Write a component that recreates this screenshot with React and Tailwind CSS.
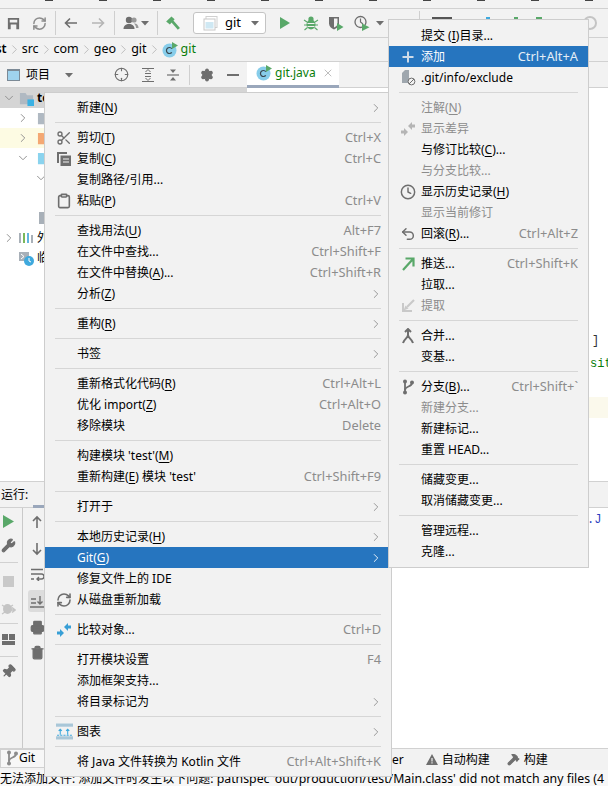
import { Scissors, Clock, Undo2, Clipboard, RefreshCw, Wrench, Printer, Trash2, Pin, Hammer, ChevronRight, ChevronDown, X, Crosshair, Settings } from 'lucide-react'

const GRAY = '#6e6e6e'
const GREEN = '#59a869'

const Svg = ({ size = 16, className = '', children }) => (
  <svg width={size} height={size} viewBox="0 0 16 16" className={`shrink-0 ${className}`}>{children}</svg>
)

const SaveIcon = () => (
  <Svg size={15}>
    <path fill={GRAY} fillRule="evenodd" d="M2 2h12v12H2z M4 4v3h8V4z M5 9v5h6V9z" />
  </Svg>
)
const ArrowLeft = ({ color }) => (
  <Svg><path d="M14 8H3M7 3.5 2.5 8 7 12.5" fill="none" stroke={color} strokeWidth="1.6" /></Svg>
)
const ArrowRight = ({ color }) => (
  <Svg><path d="M2 8h11M9 3.5 13.5 8 9 12.5" fill="none" stroke={color} strokeWidth="1.6" /></Svg>
)
const UserIcon = () => (
  <Svg>
    <circle cx="6" cy="5" r="3.2" fill={GRAY} />
    <path d="M0.5 14c0-3.5 2.5-5 5.5-5s5.5 1.5 5.5 5z" fill={GRAY} />
    <circle cx="11" cy="5" r="2.6" fill="#9a9a9a" />
    <path d="M11 8.5c2.5 0 4.5 1.2 4.5 4.5H13c0-2-.8-3.4-2-4.5z" fill="#9a9a9a" />
  </Svg>
)
const Caret = ({ color = GRAY }) => (
  <Svg size={8}><path d="M0 4h16L8 13z" fill={color} /></Svg>
)
const GreenHammer = () => (
  <Svg size={17}>
    <path d="M7 5 14 13" stroke={GREEN} strokeWidth="2.6" fill="none" />
    <path d="M2 6 7 1.5l3 2.5-4.5 5z" fill={GREEN} />
  </Svg>
)
const BugIcon = () => (
  <Svg>
    <ellipse cx="8" cy="9.5" rx="4.5" ry="5" fill={GREEN} />
    <circle cx="8" cy="4" r="2.6" fill={GREEN} />
    <path d="M1 5l3 2M15 5l-3 2M1 10h3M15 10h-3M1.5 15l3-2.5M14.5 15l-3-2.5M4 8.5h8M4 11.5h8" stroke={GREEN} strokeWidth="1.1" />
    <path d="M4.5 8.5h7M4.5 11.5h7" stroke="#f2f2f2" strokeWidth="1" />
  </Svg>
)
const CoverageIcon = () => (
  <Svg>
    <path d="M1 2h10v6.5c0 3-2.5 5-5 6-2.5-1-5-3-5-6z" fill={GRAY} />
    <path d="M6 3.5h3.5v5c0 2-1.5 3-3.5 4z" fill="#f2f2f2" />
    <path d="M9 8l6.5 4-6.5 4z" fill={GREEN} />
  </Svg>
)
const ProfileIcon = () => (
  <Svg>
    <circle cx="6.5" cy="7" r="5.5" fill="none" stroke={GRAY} strokeWidth="1.3" />
    <path d="M6.5 3.5V7l2.5 2" fill="none" stroke={GRAY} strokeWidth="1.2" />
    <path d="M8 8.5l7.5 3.7L8 16z" fill={GREEN} />
  </Svg>
)
const ClassIcon = ({ size = 16 }) => (
  <Svg size={size}>
    <circle cx="7.5" cy="8.5" r="7" fill="#87cdea" />
    <path d="M9.8 6.6A3 3 0 1 0 9.8 10.4" fill="none" stroke="#3a4750" strokeWidth="1.2" />
    <path d="M10 0l6 3.5L10 7z" fill={GREEN} />
  </Svg>
)
const ConfigIcon = () => (
  <Svg>
    <rect x="3" y="1.5" width="11" height="11" fill="none" stroke="#d0d0d0" />
    <rect x="1" y="4" width="11" height="11" fill="#fff" stroke="#c8c8c8" />
    <rect x="2.5" y="7" width="8" height="6.5" fill="#cfe8f3" />
  </Svg>
)
const ExpandIcon = () => (
  <Svg>
    <path d="M2 1.5h12M2 14.5h12M5 6.5h6M5 9.5h6" stroke={GRAY} strokeWidth="1.2" fill="none" />
    <path d="M5.5 5 8 2.5 10.5 5M5.5 11 8 13.5 10.5 11" stroke={GRAY} fill="none" />
  </Svg>
)
const CollapseIcon = () => (
  <Svg>
    <path d="M2 8h12" stroke={GRAY} strokeWidth="1.2" />
    <path d="M5 2.5h6L8 6zM5 13.5h6L8 10z" fill={GRAY} />
  </Svg>
)
const FolderIcon = ({ color = '#b0b9c2', badge }) => (
  <Svg size={15}>
    <path d="M1 2h6l1.5 2.5H15V14H1z" fill={color} />
    {badge && <rect x="9" y="9" width="7" height="7" fill="#3bb1e3" />}
  </Svg>
)
const CompareIcon = ({ color }) => (
  <Svg>
    <path d="M1 9.5h3V7l4 4-4 4v-2.5H1z" fill={color} />
    <path d="M15 6.5h-3V9L8 5l4-4v2.5h3z" fill={color} />
  </Svg>
)
const CopyIcon = () => (
  <Svg>
    <path d="M1 1h10v2H3v9H1z" fill={GRAY} />
    <path fillRule="evenodd" d="M4.5 4.5H15V15H4.5z M7 7.5v1h6v-1z M7 10.5v1h6v-1z" fill={GRAY} />
  </Svg>
)
const PlusIcon = () => (
  <Svg><path d="M8 2.5v11M2.5 8h11" stroke="#cfdbe8" strokeWidth="2" /></Svg>
)
const ExcludeIcon = () => (
  <Svg>
    <path d="M2 3l3-3h4v13H2z" fill="#9fa7ae" />
    <circle cx="11.5" cy="11.5" r="3.4" fill="#f2f2f2" stroke={GRAY} strokeWidth="1" />
    <path d="M9 14l5-5" stroke={GRAY} />
  </Svg>
)
const PushIcon = () => (
  <Svg><path d="M3 14 13 3M5.5 2.5h8v8" fill="none" stroke={GREEN} strokeWidth="2.2" /></Svg>
)
const FetchIcon = () => (
  <Svg>
    <path d="M7 9l7-7" stroke="#c9c9c9" strokeWidth="2.2" />
    <path d="M3 5v8h9" fill="none" stroke="#c9c9c9" strokeWidth="2" />
    <path d="M3.5 12.5l2-5 3 3z" fill="#c9c9c9" />
  </Svg>
)
const MergeIcon = () => (
  <Svg>
    <path d="M8 1v6c0 3-4 4-5 8M8 7c0 3 4 4 5 8M5 4l3-3 3 3" fill="none" stroke={GRAY} strokeWidth="2" />
  </Svg>
)
const BranchIcon = ({ color = GRAY }) => (
  <Svg>
    <path d="M5 2v12" stroke={color} strokeWidth="1.8" />
    <path d="M12 4c0 4-7 3-7 7" fill="none" stroke={color} strokeWidth="1.8" />
    <circle cx="5" cy="2.6" r="2" fill={color} />
    <circle cx="5" cy="13.4" r="2" fill={color} />
    <circle cx="12" cy="3.6" r="2" fill={color} />
  </Svg>
)
const ChartIcon = () => (
  <Svg size={17}>
    <rect x="0" y="0.5" width="16" height="3" fill="#a9c7d8" />
    <rect x="0" y="12.5" width="16" height="3" fill="#a9c7d8" />
    <path d="M4 11V6M2.5 7.5 4 6l1.5 1.5M11 11V6M9.5 7.5 11 6l1.5 1.5" fill="none" stroke="#3fa9dd" />
    <path d="M1 11.5h14" stroke="#3fa9dd" strokeDasharray="2 1" />
  </Svg>
)
const lucideGray = { size: 16, color: GRAY, strokeWidth: 2 }

const mainMenu = [
  { t: '新建(_N)', arrow: true },
  'sep',
  { t: '剪切(_T)', s: 'Ctrl+X', icon: <Scissors {...lucideGray} /> },
  { t: '复制(_C)', s: 'Ctrl+C', icon: <CopyIcon /> },
  { t: '复制路径/引用...' },
  { t: '粘贴(_P)', s: 'Ctrl+V', icon: <Clipboard {...lucideGray} strokeWidth={2.4} /> },
  'sep',
  { t: '查找用法(_U)', s: 'Alt+F7' },
  { t: '在文件中查找...', s: 'Ctrl+Shift+F' },
  { t: '在文件中替换(_A)...', s: 'Ctrl+Shift+R' },
  { t: '分析(_Z)', arrow: true },
  'sep',
  { t: '重构(_R)', arrow: true },
  'sep',
  { t: '书签', arrow: true },
  'sep',
  { t: '重新格式化代码(_R)', s: 'Ctrl+Alt+L' },
  { t: '优化 import(_Z)', s: 'Ctrl+Alt+O' },
  { t: '移除模块', s: 'Delete' },
  'sep',
  { t: "构建模块 'test'(_M)" },
  { t: "重新构建(_E) 模块 'test'", s: 'Ctrl+Shift+F9' },
  'sep',
  { t: '打开于', arrow: true },
  'sep',
  { t: '本地历史记录(_H)', arrow: true },
  { t: 'Git(_G)', arrow: true, active: true },
  { t: '修复文件上的 IDE' },
  { t: '从磁盘重新加载', icon: <RefreshCw {...lucideGray} strokeWidth={2.4} /> },
  'sep',
  { t: '比较对象...', s: 'Ctrl+D', icon: <CompareIcon color="#389fd6" /> },
  'sep',
  { t: '打开模块设置', s: 'F4' },
  { t: '添加框架支持...' },
  { t: '将目录标记为', arrow: true },
  'sep',
  { t: '图表', arrow: true, icon: <ChartIcon /> },
  'sep',
  { t: '将 Java 文件转换为 Kotlin 文件', s: 'Ctrl+Alt+Shift+K' },
]

const gitMenu = [
  { t: '提交 (_I)目录...' },
  { t: '添加', s: 'Ctrl+Alt+A', active: true, icon: <PlusIcon /> },
  { t: '.git/info/exclude', icon: <ExcludeIcon /> },
  'sep',
  { t: '注解(_N)', off: true },
  { t: '显示差异', off: true, icon: <CompareIcon color="#b5b5b5" /> },
  { t: '与修订比较(_C)...' },
  { t: '与分支比较...', off: true },
  { t: '显示历史记录(_H)', icon: <Clock {...lucideGray} strokeWidth={2.2} /> },
  { t: '显示当前修订', off: true },
  { t: '回滚(_R)...', s: 'Ctrl+Alt+Z', icon: <Undo2 {...lucideGray} strokeWidth={2.2} /> },
  'sep',
  { t: '推送...', s: 'Ctrl+Shift+K', icon: <PushIcon /> },
  { t: '拉取...' },
  { t: '提取', off: true, icon: <FetchIcon /> },
  'sep',
  { t: '合并...', icon: <MergeIcon /> },
  { t: '变基...' },
  'sep',
  { t: '分支(_B)...', s: 'Ctrl+Shift+`', icon: <BranchIcon /> },
  { t: '新建分支...', off: true },
  { t: '新建标记...' },
  { t: '重置 HEAD...' },
  'sep',
  { t: '储藏变更...' },
  { t: '取消储藏变更...' },
  'sep',
  { t: '管理远程...' },
  { t: '克隆...' },
]

// "_" marks the mnemonic letter
const Label = ({ text }) => {
  const i = text.indexOf('_')
  if (i < 0) return <span>{text}</span>
  return (
    <span>
      {text.slice(0, i)}
      <span className="underline underline-offset-2">{text[i + 1]}</span>
      {text.slice(i + 2)}
    </span>
  )
}

const Menu = ({ items, className }) => (
  <div className={`absolute bg-[#f2f2f2] border border-[#cdcdcd] text-[12px] text-black ${className}`}>
    {items.map((item, i) => {
      if (item === 'sep') {
        return (
          <div key={i} className="h-[9px] flex items-center pl-[10px] pr-[10px]">
            <div className="h-[1px] w-full bg-[#d6d6d6]" />
          </div>
        )
      }
      return (
        <div
          key={i}
          className={`h-[21px] flex items-center pl-[11px] pr-[10px] whitespace-nowrap ${item.active ? 'bg-[#2675bf] text-white' : ''} ${item.off ? 'text-[#8c8c8c]' : ''}`}
        >
          <div className="w-[21px] shrink-0 flex items-center">{item.icon}</div>
          <Label text={item.t} />
          <div className="flex-1" />
          {item.s && <span className={`text-[12.8px] ${item.active ? 'text-[#e4edf6]' : 'text-[#8c8c8c]'}`}>{item.s}</span>}
          {item.arrow && <ChevronRight size={14} strokeWidth={1.5} className={`mr-[-2px] ${item.active ? 'text-white' : 'text-[#8c8c8c]'}`} />}
        </div>
      )
    })}
  </div>
)

const Sep = ({ className = '' }) => <div className={`w-[1px] h-[24px] bg-[#cfcfcf] shrink-0 ${className}`} />
const Crumb = () => <ChevronRight size={15} strokeWidth={1} className="text-[#a0a0a0] shrink-0" />
const Fragment = ({ className }) => <div className={`h-[2px] shrink-0 -translate-y-[5px] ${className}`} />

const Toolbar = () => (
  <div className="h-[29px] flex items-center pl-[6px] border-b border-[#d1d1d1] shrink-0">
    <SaveIcon />
    <RefreshCw size={15} color="#8c8c8c" strokeWidth={2.4} className="ml-[11px]" />
    <Sep className="ml-[8px]" />
    <div className="ml-[7px]"><ArrowLeft color={GRAY} /></div>
    <div className="ml-[11px]"><ArrowRight color="#b5b5b5" /></div>
    <Sep className="ml-[8px]" />
    <div className="ml-[8px]"><UserIcon /></div>
    <div className="ml-[2px]"><Caret /></div>
    <Sep className="ml-[8px]" />
    <div className="ml-[6px]"><GreenHammer /></div>
    <div className="ml-[12px] w-[73px] h-[22px] bg-white border border-[#c4c4c4] rounded-[3px] flex items-center pl-[9px] text-[13px] text-black">
      <ConfigIcon />
      <span className="ml-[6px]">git</span>
      <div className="ml-[10px]"><Caret /></div>
    </div>
    <svg width="12" height="14" viewBox="0 0 12 14" className="ml-[13px] shrink-0"><path d="M1 1l10 6-10 6z" fill={GREEN} /></svg>
    <div className="ml-[12px]"><BugIcon /></div>
    <div className="ml-[9px]"><CoverageIcon /></div>
    <div className="ml-[10px]"><ProfileIcon /></div>
    <div className="ml-[6px]"><Caret /></div>
    {/* rest of the toolbar sits behind the submenu, only its top edge shows */}
    <Sep className="ml-[35px]" />
    <Fragment className="w-[20px] ml-[12px] bg-[#555]" />
    <Fragment className="w-[4px] ml-[34px] bg-[#3fa9dd]" />
    <Fragment className="w-[4px] ml-[24px] bg-[#59a869]" />
    <Fragment className="w-[6px] ml-[18px] bg-[#59a869]" />
    <div className="ml-auto mr-[11px] w-[14px] h-[14px] rounded-full border-2 border-[#c4c4c4]" />
  </div>
)

const Breadcrumbs = () => (
  <div className="h-[24px] flex items-center text-[12.5px] text-black border-b border-[#d1d1d1] shrink-0 overflow-hidden">
    <span className="ml-[-17px] font-semibold">test</span>
    <Crumb />
    <span>src</span>
    <Crumb />
    <span>com</span>
    <Crumb />
    <span>geo</span>
    <Crumb />
    <span>git</span>
    <Crumb />
    <ClassIcon />
    <span className="ml-[3px] text-[#0a7d0a]">git</span>
  </div>
)

const ToolRow = () => (
  <div className="h-[26px] flex items-center shrink-0 text-[12px] text-black border-b border-[#d1d1d1]">
    <div className="w-[247px] flex items-center pl-[7px]">
      <div className="w-[13px] h-[12px] bg-[#9fd3ee] border border-[#7c8a96] border-t-[2px]" />
      <span className="ml-[6px]">项目</span>
      <div className="ml-[15px]"><Caret /></div>
      <Crosshair size={15} color={GRAY} strokeWidth={1.8} className="ml-[41px]" />
      <div className="ml-[11px]"><ExpandIcon /></div>
      <div className="ml-[9px]"><CollapseIcon /></div>
      <div className="w-[1px] h-[20px] bg-[#cfcfcf] ml-[8px]" />
      <Settings size={14} color={GRAY} fill={GRAY} className="ml-[10px]" />
      <div className="w-[12px] h-[2px] bg-[#6e6e6e] ml-[13px]" />
    </div>
    <div className="w-[92px] h-[26px] bg-white border-b-[3px] border-[#9aa7bb] flex items-center pl-[9px]">
      <ClassIcon />
      <span className="ml-[3px] text-[#0a7d0a]">git.java</span>
      <X size={12} color="#a8a8a8" strokeWidth={1.5} className="ml-[6px]" />
    </div>
  </div>
)

const TreeRow = ({ chevron, chevronPl = 'pl-[2px]', children, className = '' }) => (
  <div className={`h-[20px] flex items-center text-[12px] whitespace-nowrap ${chevronPl} ${className}`}>
    {chevron === 'down' && <ChevronDown size={14} color="#8c8c8c" strokeWidth={1.6} />}
    {chevron === 'right' && <ChevronRight size={14} color="#8c8c8c" strokeWidth={1.6} />}
    {children}
  </div>
)

const ProjectTree = () => (
  <div className="w-[247px] shrink-0 bg-white overflow-hidden">
    <TreeRow chevron="down" className="bg-[#d5d5d5]">
      <div className="ml-[3px]"><FolderIcon badge /></div>
      <span className="ml-[3px] font-bold">test</span>
    </TreeRow>
    <TreeRow chevron="right" chevronPl="pl-[16px]">
      <div className="ml-[7px]"><FolderIcon /></div>
    </TreeRow>
    <TreeRow chevron="right" chevronPl="pl-[16px]" className="bg-[#fdfbe3]">
      <div className="ml-[7px]"><FolderIcon color="#f4a873" /></div>
    </TreeRow>
    <TreeRow chevron="down" chevronPl="pl-[16px]">
      <div className="ml-[7px]"><FolderIcon color="#8ad3ee" /></div>
    </TreeRow>
    <TreeRow chevron="down" chevronPl="pl-[34px]" />
    <TreeRow />
    <TreeRow chevronPl="pl-[39px]">
      <div className="w-[6px] h-[12px] bg-[#a8b0b8]" />
    </TreeRow>
    <TreeRow chevron="right">
      <svg width="15" height="12" viewBox="0 0 15 12" className="ml-[3px] shrink-0">
        <path d="M1 1v10" stroke="#a8b0b8" strokeWidth="2" />
        <path d="M5 1v10" stroke="#7ab85c" strokeWidth="2" />
        <path d="M9 1v10" stroke="#62b5df" strokeWidth="2" />
        <path d="M13 3v8" stroke="#a8b0b8" strokeWidth="2" />
      </svg>
      <span className="ml-[3px]">外部库</span>
    </TreeRow>
    <TreeRow chevronPl="pl-[19px]">
      <svg width="15" height="15" viewBox="0 0 15 15" className="shrink-0">
        <path d="M0 1h10v9H0z" fill="#a8b0b8" />
        <path d="M2 3l3 2.5L2 8" fill="none" stroke="#fff" />
        <circle cx="10" cy="10" r="5" fill="#3fa9dd" />
        <path d="M10 7v3l2 1" fill="none" stroke="#fff" />
      </svg>
      <span className="ml-[3px]">临时文件</span>
    </TreeRow>
  </div>
)

const Editor = () => (
  <div className="flex-1 bg-white flex flex-col overflow-hidden [font-family:'Liberation_Mono',monospace] text-[12px] leading-[21px]">
    <div className="h-[243px] shrink-0" />
    <div className="pl-[345px] text-[#333]">]</div>
    <div className="pl-[343px] mt-[2px] text-[#0a7d0a] whitespace-nowrap">sit</div>
    <div className="h-[22px] shrink-0" />
    <div className="h-[21px] bg-[#fbf9ec] shrink-0" />
  </div>
)

const RunPanel = () => (
  <div className="flex-1 flex flex-col min-h-0">
    <div className="h-[27px] flex items-center bg-[#f2f2f2] border-y border-[#d1d1d1] text-[12px] text-black shrink-0 relative">
      <span className="ml-[1px]">运行:</span>
      <div className="absolute left-[33px] bottom-[-1px] w-[12px] h-[3px] bg-[#9aa7bb]" />
    </div>
    <div className="flex-1 flex min-h-0">
      <div className="w-[23px] shrink-0 bg-[#f2f2f2] border-r border-[#c9c9c9] flex flex-col items-center pr-[5px] pt-[7px]">
        <svg width="11" height="13" viewBox="0 0 11 13" className="shrink-0"><path d="M0 0l11 6.5L0 13z" fill={GREEN} /></svg>
        <Wrench size={15} color={GRAY} fill={GRAY} className="mt-[10px] shrink-0" />
        <div className="w-[18px] h-[1px] bg-[#d1d1d1] mt-[9px] shrink-0" />
        <div className="w-[11px] h-[11px] bg-[#c9c9c9] mt-[13px] shrink-0" />
        <svg width="15" height="15" viewBox="0 0 15 15" className="mt-[14px] shrink-0">
          <ellipse cx="6.5" cy="8" rx="4.5" ry="5" fill="#c4c4c4" />
          <path d="M1 4l3 2M12 4 9 6M1 13l3-2" stroke="#c4c4c4" strokeWidth="1.2" />
          <path d="M8 9h6M11 6.5 14 9l-3 2.5" stroke="#c4c4c4" strokeWidth="1.5" fill="none" />
        </svg>
        <div className="w-[18px] h-[1px] bg-[#d1d1d1] mt-[7px] shrink-0" />
        <svg width="13" height="11" viewBox="0 0 13 11" className="mt-[10px] shrink-0">
          <path d="M0 0h6v6H0zM7 0h6v6H7zM0 7h13v4H0z" fill={GRAY} />
        </svg>
        <div className="w-[18px] h-[1px] bg-[#d1d1d1] mt-[11px] shrink-0" />
        <Pin size={15} color={GRAY} fill={GRAY} className="mt-[7px] rotate-45 shrink-0" />
      </div>
      <div className="w-[22px] shrink-0 bg-[#f2f2f2] flex flex-col items-center pl-[6px] pt-[7px]">
        <svg width="14" height="14" viewBox="0 0 14 14" className="shrink-0"><path d="M7 13V2M3 6l4-4 4 4" fill="none" stroke={GRAY} strokeWidth="1.6" /></svg>
        <svg width="14" height="14" viewBox="0 0 14 14" className="mt-[13px] shrink-0"><path d="M7 1v11M3 8l4 4 4-4" fill="none" stroke={GRAY} strokeWidth="1.6" /></svg>
        <svg width="14" height="13" viewBox="0 0 14 13" className="mt-[12px] shrink-0">
          <path d="M1 1.5h12M1 6h10.5a2.5 2.5 0 0 1 0 5H7M9 9l-2 2 2 2M1 11h3" fill="none" stroke={GRAY} strokeWidth="1.4" />
        </svg>
        <div className="w-[19px] h-[22px] mt-[9px] shrink-0 bg-[#dcdcdc] rounded-[3px] flex items-center justify-center">
          <svg width="14" height="13" viewBox="0 0 14 13">
            <path d="M1 4h5M1 8h5M0 12h14M10 1v8M7.5 6.5 10 9l2.5-2.5" fill="none" stroke={GRAY} strokeWidth="1.4" />
          </svg>
        </div>
        <Printer size={15} color={GRAY} fill={GRAY} className="mt-[8px] shrink-0" />
        <Trash2 size={15} color={GRAY} fill={GRAY} className="mt-[10px] shrink-0" />
      </div>
      <div className="flex-1 bg-white [font-family:'Liberation_Mono',monospace] text-[12px] text-[#2c3fbf] pl-[542px] pt-[3px]">.J</div>
    </div>
  </div>
)

const BottomTabs = () => (
  <div className="h-[22px] flex items-center bg-[#f2f2f2] border-t border-[#d1d1d1] text-[12px] text-black shrink-0 whitespace-nowrap">
    <div className="w-[45px] h-[19px] mb-[3px] bg-[#f7f7f7] border border-[#d1d1d1] flex items-center pl-[3px] shrink-0">
      <BranchIcon color="#8c8c8c" />
      <span className="ml-[-1px]">Git</span>
    </div>
    <span className="ml-[344px]">ler</span>
    <svg width="12" height="11" viewBox="0 0 12 11" className="ml-[22px] shrink-0"><path fillRule="evenodd" d="M6 0l6 11H0z M5.4 4v3.5h1.2V4z M5.4 8.3v1.2h1.2V8.3z" fill={GRAY} /></svg>
    <span className="ml-[4px]">自动构建</span>
    <Hammer size={13} color={GRAY} fill={GRAY} className="ml-[17px]" />
    <span className="ml-[4px]">构建</span>
  </div>
)

export default function App() {
  return (
    <div className="relative w-[608px] h-[786px] overflow-hidden flex flex-col bg-[#f2f2f2] [font-family:'Noto_Sans','Noto_Sans_CJK_SC',sans-serif]">
      {/* cut-off menu bar above the toolbar */}
      <div className="h-[9px] shrink-0 border-b border-[#d1d1d1] flex items-start gap-[46px] pl-[45px]">
        {[...Array(11).keys()].map(i => <div key={i} className="w-[8px] h-[1px] bg-[#444]" />)}
      </div>
      <Toolbar />
      <Breadcrumbs />
      <ToolRow />
      <div className="h-[393px] shrink-0 flex">
        <ProjectTree />
        <Editor />
      </div>
      <RunPanel />
      <BottomTabs />
      <div className="h-[16px] shrink-0 bg-[#f7f7f7] text-[12px] leading-[18px] text-black whitespace-nowrap overflow-hidden">
        无法添加文件: 添加文件时发生以下问题: <span className="text-[12.3px]">pathspec 'out/production/test/Main.class' did not match any files (4</span>
      </div>

      <Menu items={mainMenu} className="left-[44px] top-[92px] w-[348px] h-[685px] pt-[4px]" />
      <Menu items={gitMenu} className="left-[388px] top-[19px] w-[201px] h-[549px] pt-[5px]" />
    </div>
  )
}
